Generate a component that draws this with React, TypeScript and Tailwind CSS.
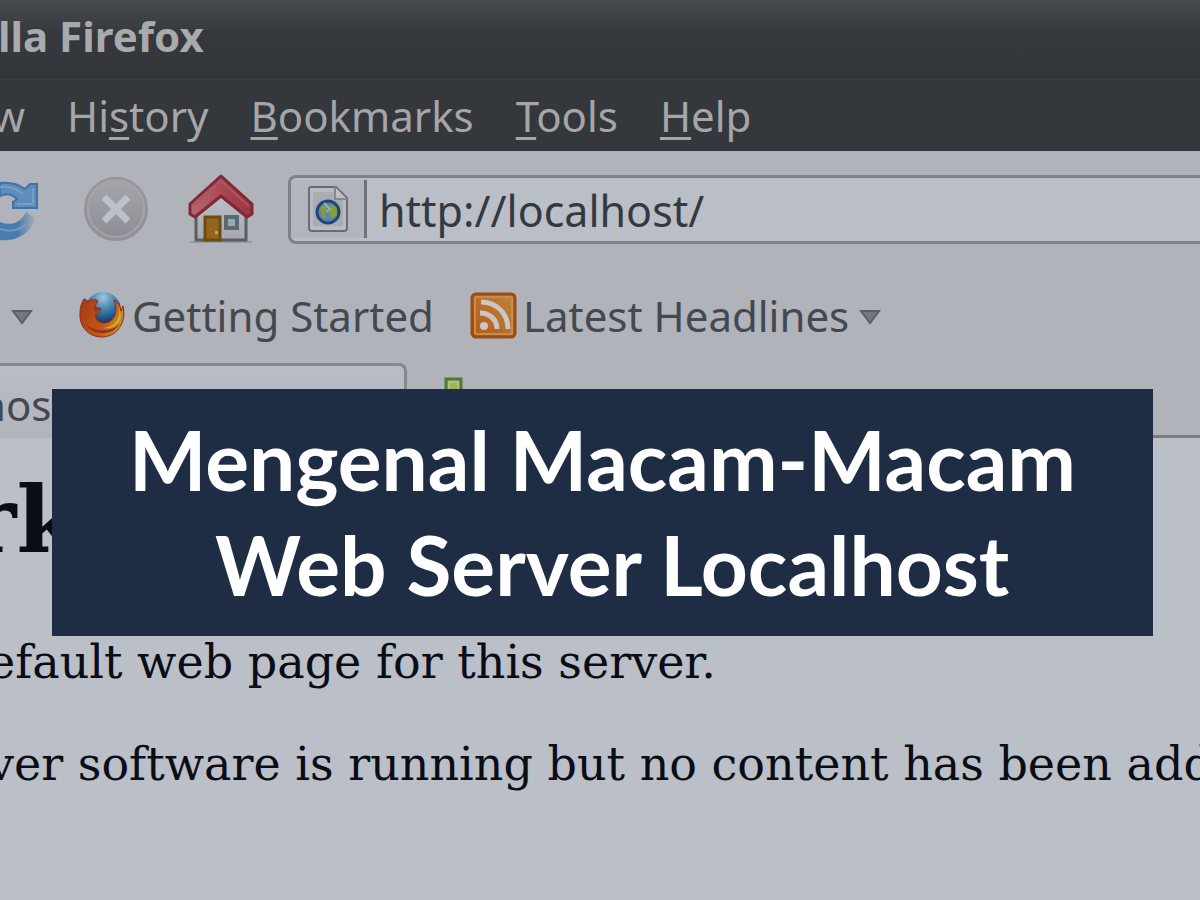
import React, { useState } from 'react';

const menuItems = [
  { before: '', key: '', after: 'w' },
  { before: 'Hi', key: 's', after: 'tory' },
  { before: '', key: 'B', after: 'ookmarks' },
  { before: '', key: 'T', after: 'ools' },
  { before: '', key: 'H', after: 'elp' },
];

function ReloadIcon() {
  return (
    <svg width="40" height="64" viewBox="0 0 40 64" fill="none">
      <defs>
        <linearGradient id="reload-fade" x1="0" y1="0" x2="1" y2="0">
          <stop offset="0.5" stopColor="#4a7bae" />
          <stop offset="1" stopColor="#4a7bae" stopOpacity="0.1" />
        </linearGradient>
      </defs>
      <path d="M0 6 C9 5 18 7 25 12 L30 7 H37 V31 H13 V25 L17 22 C12 17 6 16 0 19 Z" fill="#5f8dbb" stroke="#3f74a9" strokeWidth="2" />
      <path d="M0 10 C9 9 16 11 23 17 M17 27 H33 M33 11 V27" stroke="#7a9fc5" strokeWidth="2" />
      <path d="M0 45 C10 49 20 47 26 35 L35 41 C32 56 16 65 0 63 Z" fill="url(#reload-fade)" />
      <path d="M0 52 C9 55 19 54 27 46" stroke="#7398be" strokeWidth="2" />
    </svg>
  );
}

function StopIcon() {
  return (
    <svg width="64" height="64" viewBox="0 0 64 64" fill="none">
      <defs>
        <linearGradient id="stop-face" x1="0" y1="0" x2="0" y2="1">
          <stop offset="0" stopColor="#a5a6ab" />
          <stop offset="1" stopColor="#8d8e95" />
        </linearGradient>
      </defs>
      <circle cx="32" cy="32" r="31" fill="url(#stop-face)" stroke="#929399" strokeWidth="2" />
      <circle cx="32" cy="32" r="28" stroke="#a3a4a9" strokeWidth="2" />
      <path d="M20 20 L44 44 M44 20 L20 44" stroke="#bcc0c9" strokeWidth="7" />
    </svg>
  );
}

function HomeIcon() {
  return (
    <svg width="66" height="70" viewBox="0 0 66 70" fill="none">
      <defs>
        <linearGradient id="home-wall" x1="0" y1="0" x2="0" y2="1">
          <stop offset="0" stopColor="#bcc1ca" />
          <stop offset="1" stopColor="#a7a9af" />
        </linearGradient>
        <linearGradient id="home-roof" x1="0" y1="0" x2="1" y2="0">
          <stop offset="0" stopColor="#b56a72" />
          <stop offset="0.5" stopColor="#a74a54" />
          <stop offset="1" stopColor="#9b3541" />
        </linearGradient>
      </defs>
      <rect x="2" y="67" width="62" height="2" fill="#989ba1" />
      <path d="M8 34 L33 16 L58 34 V66 H8 Z" fill="url(#home-wall)" stroke="#5a5d65" strokeWidth="3" />
      <path d="M33 2 L64 30 V40 L59 43 L33 22 L7 43 L2 40 V30 Z" fill="url(#home-roof)" stroke="#812838" strokeWidth="3" strokeLinejoin="round" />
      <path d="M5 32 L33 7 L61 32" stroke="#ae555f" strokeWidth="2" />
      <rect x="17" y="43" width="15" height="23" fill="#94651f" stroke="#704b10" strokeWidth="3" />
      <rect x="27" y="57" width="3" height="3" fill="#c4a64c" />
      <rect x="38" y="43" width="11" height="11" fill="#8fabb8" stroke="#5f6970" strokeWidth="4" />
    </svg>
  );
}

function PageIcon() {
  return (
    <svg width="42" height="48" viewBox="0 0 42 48" fill="none">
      <path d="M4 2 H29 L40 13 V43 Q40 46 37 46 H5 Q2 46 2 43 V4 Q2 2 4 2 Z" fill="#b9bdc3" stroke="#696c70" strokeWidth="2" />
      <path d="M6 7 H27 V15 H36 V41 H6 Z" fill="#a9adaf" />
      <path d="M28 2 V14 H40" fill="#bbbfc6" stroke="#85888c" strokeWidth="2" />
      <circle cx="21" cy="27" r="11" fill="#5a86a6" stroke="#1f4580" strokeWidth="3" />
      <path d="M13 23 L18 18 L21 22 L17 28 L19 33 L15 32 Z M24 19 L30 23 L30 30 L25 33 L22 28 Z" fill="#8a9c36" />
      <path d="M17 18 L23 24 L19 27" stroke="#8db0c6" strokeWidth="2" />
    </svg>
  );
}

function FirefoxIcon() {
  return (
    <svg width="48" height="48" viewBox="0 0 48 48" fill="none">
      <defs>
        <radialGradient id="fx-globe" cx="0.5" cy="0.15" r="0.8">
          <stop offset="0" stopColor="#a2c6d6" />
          <stop offset="0.45" stopColor="#3a7fb0" />
          <stop offset="1" stopColor="#0b2858" />
        </radialGradient>
        <linearGradient id="fx-tail" x1="0" y1="0.3" x2="1" y2="0.7">
          <stop offset="0" stopColor="#a93d17" />
          <stop offset="0.6" stopColor="#c25a14" />
          <stop offset="1" stopColor="#c89a2b" />
        </linearGradient>
      </defs>
      <circle cx="25" cy="19" r="18" fill="url(#fx-globe)" />
      <path d="M6 8 C8 8 9 9 10 11 C13 8 18 8 20 10 L17 15 C18 17 20 18 23 18 C23 20 20 22 18 23 C17 27 19 31 25 32 C33 33 39 25 38 16 L36 9 C42 13 43 18 43 20 L45 15 C49 31 39 46 24 46 C10 46 1 35 2 22 C2 16 4 11 6 8 Z" fill="url(#fx-tail)" stroke="#8c2c1b" strokeWidth="1" />
      <path d="M41 17 C43 28 36 36 26 37 C34 39 43 32 43 24 Z" fill="#d1ad38" />
      <path d="M8 34 C15 44 33 46 42 33 C35 40 19 42 8 34 Z" fill="#973119" />
      <path d="M15 15 L23 17 L17 22 Z" fill="#8f3d22" />
    </svg>
  );
}

function FeedIcon() {
  return (
    <svg width="47" height="47" viewBox="0 0 47 47" fill="none">
      <defs>
        <linearGradient id="feed-face" x1="0" y1="1" x2="1" y2="0">
          <stop offset="0" stopColor="#b55a10" />
          <stop offset="1" stopColor="#bd8440" />
        </linearGradient>
      </defs>
      <rect x="2" y="2" width="43" height="43" rx="4" fill="url(#feed-face)" stroke="#9b4c12" strokeWidth="3" />
      <rect x="5" y="5" width="37" height="37" rx="1" stroke="#c68b50" strokeWidth="2" />
      <circle cx="14" cy="34" r="4" fill="#c8c6c6" />
      <path d="M10 21 C20 21 27 28 27 37 M11 10 C27 10 38 22 38 37" stroke="#c8c6c6" strokeWidth="5" />
    </svg>
  );
}

function DropArrow() {
  return (
    <svg width="22" height="16" viewBox="0 0 22 16" fill="none">
      <path d="M2 2 H20 L11 14 Z" fill="#74777d" stroke="#5c5f65" strokeWidth="2" />
    </svg>
  );
}

export default function App() {
  const [url, setUrl] = useState('http://localhost/');

  return (
    <div className="relative min-h-screen overflow-hidden bg-[#babfc8] font-['Noto_Sans','Open_Sans',sans-serif]">
      {/* Title bar */}
      <header className="h-[78px] bg-linear-to-b from-[#484c4e] via-[#35383d] via-45% to-[#33363b] border-b-2 border-[#303338] flex items-center">
        <h1 className="-ml-0.5 text-[42px] leading-[72px] pb-1 font-bold text-[#a9aaac] whitespace-nowrap">lla Firefox</h1>
      </header>

      {/* Menu bar */}
      <nav className="h-[73px] bg-[#34373c] border-t-2 border-[#393c41] flex items-center gap-[42px] -ml-2">
        {menuItems.map(item => (
          <button key={item.before + item.key + item.after} className="text-[42px] leading-[72px] text-[#a5a6a9] whitespace-nowrap">
            {item.before}
            <span className="underline decoration-[3px] underline-offset-[5px]">{item.key}</span>
            {item.after}
          </button>
        ))}
      </nav>

      {/* Navigation toolbar */}
      <div className="h-[116px] bg-[#b0b3b9] flex items-center">
        <button aria-label="Reload" className="w-[84px] shrink-0"><ReloadIcon /></button>
        <button aria-label="Stop" className="w-[104px] shrink-0"><StopIcon /></button>
        <button aria-label="Home" className="w-[100px] shrink-0"><HomeIcon /></button>
        <div className="flex-1 h-[69px] flex items-center border-3 border-r-0 border-[#7f8185] rounded-l-lg bg-[#b9bec7]">
          <div className="h-[58px] w-[76px] shrink-0 pl-4 flex items-center border-r-3 border-[#6f727a] bg-[#b2b5be]">
            <PageIcon />
          </div>
          <input
            aria-label="Location"
            value={url}
            onChange={e => setUrl(e.target.value)}
            className="flex-1 min-w-0 pl-3 pt-1 text-[43px] leading-[60px] text-[#34383f] bg-transparent outline-none"
          />
        </div>
      </div>

      {/* Bookmarks toolbar */}
      <div className="h-24 bg-[#b0b3b9] flex items-center text-[42px] text-[#44484f] whitespace-nowrap">
        <button aria-label="More bookmarks" className="w-[78px] pl-[11px] pt-1 shrink-0"><DropArrow /></button>
        <a href="#getting-started" className="flex items-center gap-1.5">
          <FirefoxIcon />
          Getting Started
        </a>
        <button className="ml-9 flex items-center gap-1.5">
          <FeedIcon />
          Latest Headlines
          <span className="ml-1 pt-1"><DropArrow /></span>
        </button>
      </div>

      {/* Tab strip */}
      <div className="h-[75px] bg-[#b0b3b9] border-b-3 border-[#797c83] flex items-start">
        <button className="h-[75px] w-[407px] text-left text-[42px] leading-[78px] text-[#44484f] border-t-3 border-r-3 border-[#85888d] rounded-tr-lg bg-linear-to-b from-[#b9bdc5] to-[#b1b4bb]">
          <span className="-ml-5">host/</span>
        </button>
        <button aria-label="Open a new tab" className="mt-3 ml-[37px]">
          <svg width="20" height="50" viewBox="0 0 20 50" fill="none">
            <rect x="2" y="4" width="15" height="44" fill="#a3b25a" stroke="#4f7a38" strokeWidth="3" />
            <rect x="5" y="7" width="9" height="38" stroke="#b3be84" strokeWidth="2" />
          </svg>
        </button>
      </div>

      {/* Page content */}
      <main className="font-['DejaVu_Serif',serif] text-[#0b0d14] whitespace-nowrap">
        <h2 className="-ml-8 pt-7 text-[92px] leading-[108px] font-bold">rks!</h2>
        <p className="-ml-3 mt-[61px] text-[46px] leading-[54px]">efault web page for this server.</p>
        <p className="-ml-3 mt-12 text-[46px] leading-[54px]">ver software is running but no content has been added</p>
      </main>

      {/* Article title laid over the browser window */}
      <div className="absolute top-[389px] inset-x-0 pl-[52px] pr-[47px]">
        <div className="h-[247px] pt-[18px] bg-[#1f2d44] text-center text-white">
          <h2 className="text-[82px] leading-[105px] font-bold font-['Lato',sans-serif]">
            Mengenal Macam-Macam
            <br />
            &nbsp;Web Server Localhost
          </h2>
        </div>
      </div>
    </div>
  );
}
